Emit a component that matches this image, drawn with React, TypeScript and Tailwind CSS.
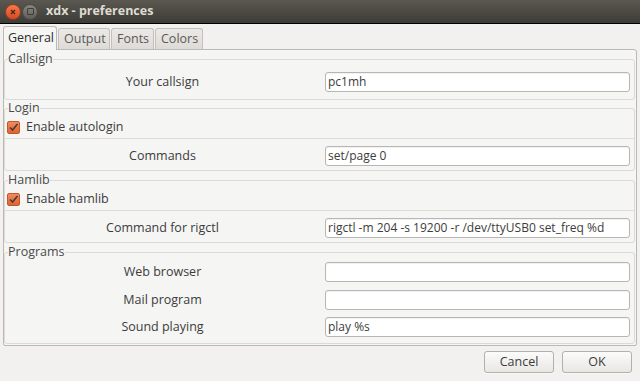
import React from "react";

const font = "font-['Open_Sans','DejaVu_Sans',sans-serif]";

function Field({ value = "" }: { value?: string }) {
  return (
    <div className="ml-[5px] h-[20px] w-[305px] truncate rounded-[3px] border border-[#b9b6b1] bg-white px-[2px] text-[12px] leading-[18px] text-[#3c3c3c] shadow-[inset_0_1px_1px_rgba(0,0,0,0.06)]">
      {value}
    </div>
  );
}

function Row({ label, value, className = "" }: { label: string; value?: string; className?: string }) {
  return (
    <div className={`flex items-center ${className}`}>
      <div className="w-[315px] text-center">{label}</div>
      <Field value={value} />
    </div>
  );
}

function Check({ label }: { label: string }) {
  return (
    <div className="flex h-[22px] items-center pl-[2px]">
      <div className="flex h-[13px] w-[13px] items-center justify-center rounded-[2px] border border-[#c4562c] bg-gradient-to-b from-[#f08a5d] to-[#e0622f]">
        <svg width="11" height="11" viewBox="0 0 11 11">
          <path d="M2 5.5 L4.5 8 L9.5 2" fill="none" stroke="#4a3b33" strokeWidth="1.6" />
        </svg>
      </div>
      <span className="ml-[6px]">{label}</span>
    </div>
  );
}

function Group({ title, className = "", children }: { title: string; className?: string; children: React.ReactNode }) {
  return (
    <fieldset className={`mr-px rounded-[3px] border border-[#dcdad6] ${className}`}>
      <legend className="ml-[3px] h-[16px] leading-[16px] text-[#4a4a4a]">{title}</legend>
      {children}
    </fieldset>
  );
}

function Sep() {
  return <div className="h-px bg-[#dedcd8]" />;
}

export default function App() {
  const tabs = [
    { name: "Output", w: "w-[52px]" },
    { name: "Fonts", w: "w-[43px]" },
    { name: "Colors", w: "w-[48px]" },
  ];
  return (
    <div className={`flex h-[381px] w-[640px] flex-col overflow-hidden bg-[#f2f1f0] text-[12.5px] text-[#3c3c3c] ${font}`}>
      {/* title bar */}
      <div className="flex h-[24px] items-center border-b border-black bg-gradient-to-b from-[#5a5850] to-[#3d3c37]">
        <div className="ml-[5px] flex h-[16px] w-[16px] items-center justify-center rounded-full border border-[#9c3a1a] bg-gradient-to-b from-[#f47a4e] to-[#d4491d]">
          <svg width="6" height="6" viewBox="0 0 6 6">
            <path d="M1 1 L5 5 M5 1 L1 5" stroke="#4a1f10" strokeWidth="1.2" />
          </svg>
        </div>
        <div className="ml-[1px] flex h-[16px] w-[16px] items-center justify-center rounded-full border border-[#4a4945] bg-gradient-to-b from-[#86857f] to-[#5f5e59]">
          <div className="h-[7px] w-[7px] rounded-[1px] border border-[#3e3d39]" />
        </div>
        <span className="ml-[8px] text-[12.5px] font-bold text-[#dfdbd2]">xdx - preferences</span>
      </div>

      <div className="px-[3px]">
        {/* tabs */}
        <div className="flex h-[25px] items-end">
          <div className="relative z-10 -mb-px h-[24px] w-[54px] rounded-t-[3px] border border-b-0 border-[#bcb9b4] bg-[#f5f5f4] pl-[4px] leading-[22px] text-[#2e2e2e]">
            General
          </div>
          {tabs.map((t) => (
            <div
              key={t.name}
              className={`ml-px h-[21px] ${t.w} rounded-t-[3px] border border-b-0 border-[#c4c1bc] bg-gradient-to-b from-[#ebe9e6] to-[#dedbd7] pl-[5px] leading-[20px] text-[#5a5a5a]`}
            >
              {t.name}
            </div>
          ))}
        </div>

        {/* panel */}
        <div className="flex w-[634px] flex-col rounded-b-[2px] rounded-tr-[3px] border border-[#bcb9b4] bg-[#f5f5f4] pb-px">
          <Group title="Callsign" className="mt-px">
            <Row label="Your callsign" value="pc1mh" className="pb-[7px] pt-[5px]" />
          </Group>

          <Group title="Login">
            <Check label="Enable autologin" />
            <Sep />
            <Row label="Commands" value="set/page 0" className="pb-[4px] pt-[7px]" />
          </Group>

          <Group title="Hamlib" className="mt-px">
            <Check label="Enable hamlib" />
            <Sep />
            <Row label="Command for rigctl" value="rigctl -m 204 -s 19200 -r /dev/ttyUSB0 set_freq %d" className="pb-[4px] pt-[7px]" />
          </Group>

          <Group title="Programs" className="mt-px pb-[6px] pt-[2px]">
            <Row label="Web browser" />
            <Row label="Mail program" className="mt-[8px]" />
            <Row label="Sound playing" value="play %s" className="mt-[7px]" />
          </Group>
        </div>
      </div>

      {/* buttons */}
      <div className="mr-[8px] mt-[5px] flex justify-end gap-[8px]">
        {["Cancel", "OK"].map((b) => (
          <button
            key={b}
            className="h-[22px] w-[70px] rounded-[3px] border border-[#b3b0ab] bg-gradient-to-b from-[#fbfbfa] to-[#e9e7e4] text-[#3c3c3c] shadow-[0_1px_0_rgba(255,255,255,0.6)]"
          >
            {b}
          </button>
        ))}
      </div>
    </div>
  );
}
